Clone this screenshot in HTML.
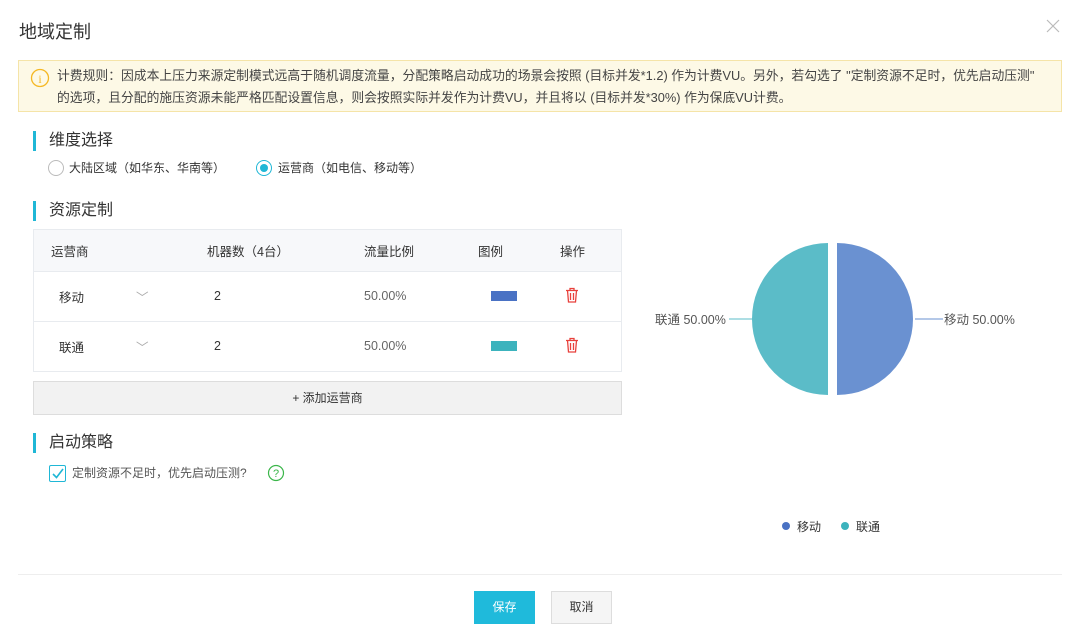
<!DOCTYPE html>
<html><head><meta charset="utf-8"><style>
*{margin:0;padding:0;box-sizing:border-box}
body{width:1080px;height:642px;background:#fff;font-family:"Liberation Sans","Noto Sans CJK SC",sans-serif;color:#333;position:relative;overflow:hidden;font-size:12px}
.a{position:absolute}
.title{left:19px;top:18px;font-size:18px;color:#333}
.alert{left:18px;top:60px;width:1044px;height:52px;background:#fdf9e6;border:1px solid #f5e4a8;}
.alert p{position:absolute;left:38px;top:4px;font-size:12.8px;line-height:22px;color:#444;white-space:nowrap}
.sec{font-size:16px;color:#333;border-left:3px solid #1fb7d6;padding-left:13px;height:20px;line-height:20px}
table{border-collapse:collapse;width:587px;font-size:12.5px;table-layout:fixed}
td{height:50px;border-bottom:1px solid #e8ebef;color:#333;padding:0}
tr.h td{height:41px}
</style></head><body>
<div class="a title">地域定制</div>
<svg class="a" style="left:1046px;top:19px" width="14" height="14"><path d="M1 1L13 13M13 1L1 13" stroke="#bbb" stroke-width="1.2"/></svg>
<div class="a alert">
<svg class="a" style="left:11px;top:7px" width="20" height="20"><circle cx="10" cy="10" r="8.5" fill="none" stroke="#f5b824" stroke-width="1.3"/><text x="10" y="15" text-anchor="middle" font-size="12" fill="#f5b824" font-family="Liberation Serif">i</text></svg>
<p>计费规则：因成本上压力来源定制模式远高于随机调度流量，分配策略启动成功的场景会按照 (目标并发*1.2) 作为计费VU。另外，若勾选了 "定制资源不足时，优先启动压测"<br>的选项，且分配的施压资源未能严格匹配设置信息，则会按照实际并发作为计费VU，并且将以 (目标并发*30%) 作为保底VU计费。</p>
</div>
<div class="a sec" style="left:33px;top:131px">维度选择</div>
<div class="a" style="left:48px;top:160px;width:16px;height:16px;border:1px solid #bbb;border-radius:50%"></div>
<div class="a" style="left:69px;top:160px;line-height:16px">大陆区域（如华东、华南等）</div>
<div class="a" style="left:256px;top:160px;width:16px;height:16px;border:1px solid #1fb7d6;border-radius:50%"><div style="margin:3px;width:8px;height:8px;border-radius:50%;background:#1fb7d6"></div></div>
<div class="a" style="left:278px;top:160px;line-height:16px">运营商（如电信、移动等）</div>
<div class="a sec" style="left:33px;top:201px">资源定制</div>
<div class="a" style="left:33px;top:229px;width:589px;border:1px solid #e8ebef;border-bottom:none">
<table>
<colgroup><col style="width:173px"><col style="width:157px"><col style="width:114px"><col style="width:82px"><col></colgroup>
<tr class="h" style="background:#f7f8fa"><td style="padding-left:17px">运营商</td><td>机器数（4台）</td><td>流量比例</td><td>图例</td><td>操作</td></tr>
<tr><td style="padding-left:25px">移动<span style="margin-left:52px;color:#aaa">﹀</span></td><td style="padding-left:7px">2</td><td style="color:#666">50.00%</td><td style="padding-left:13px"><div style="width:26px;height:10px;background:#4a72c4"></div></td><td style="padding-left:5px"><svg width="14" height="16"><path d="M1 3.5H13M5 3.5V1.5H9V3.5M2.5 3.5L3.5 15H10.5L11.5 3.5M5.5 6V13M8.5 6V13" fill="none" stroke="#e8413c" stroke-width="1.3"/></svg></td></tr>
<tr><td style="padding-left:25px">联通<span style="margin-left:52px;color:#aaa">﹀</span></td><td style="padding-left:7px">2</td><td style="color:#666">50.00%</td><td style="padding-left:13px"><div style="width:26px;height:10px;background:#3cb3bd"></div></td><td style="padding-left:5px"><svg width="14" height="16"><path d="M1 3.5H13M5 3.5V1.5H9V3.5M2.5 3.5L3.5 15H10.5L11.5 3.5M5.5 6V13M8.5 6V13" fill="none" stroke="#e8413c" stroke-width="1.3"/></svg></td></tr>
</table></div>
<div class="a" style="left:33px;top:381px;width:589px;height:34px;background:#f2f2f2;border:1px solid #ddd;text-align:center;line-height:32px">+ 添加运营商</div>
<div class="a sec" style="left:33px;top:433px">启动策略</div>
<div class="a" style="left:49px;top:465px;width:17px;height:17px;border:1px solid #1fb7d6;border-radius:2px"><svg width="15" height="15"><path d="M3 8L6.5 11.5L13 3" fill="none" stroke="#1fb7d6" stroke-width="1.6"/></svg></div>
<div class="a" style="left:72px;top:465px;line-height:17px;color:#555">定制资源不足时，优先启动压测?</div>
<svg class="a" style="left:267px;top:464px" width="18" height="18"><circle cx="9" cy="9" r="7.5" fill="none" stroke="#3bb64a" stroke-width="1.2"/><text x="9" y="13" text-anchor="middle" font-size="11" fill="#3bb64a">?</text></svg>
<svg class="a" style="left:640px;top:230px" width="420" height="320">
<path d="M188 13 A76 76 0 0 0 188 165 Z" fill="#5bbcc8"/>
<path d="M197 13 A76 76 0 0 1 197 165 Z" fill="#6a91d1"/>
<line x1="89" y1="89" x2="113" y2="89" stroke="#5bbcc8"/>
<line x1="275" y1="89" x2="303" y2="89" stroke="#6a91d1"/>
<text x="15" y="94" font-size="12.5" fill="#555">联通 50.00%</text>
<text x="304" y="94" font-size="12.5" fill="#555">移动 50.00%</text>
<circle cx="146" cy="296" r="4" fill="#4a72c4"/><text x="157" y="301" font-size="12" fill="#333">移动</text>
<circle cx="205" cy="296" r="4" fill="#3cb3bd"/><text x="216" y="301" font-size="12" fill="#333">联通</text>
</svg>
<div class="a" style="left:18px;top:574px;width:1044px;height:1px;background:#eee"></div>
<div class="a" style="left:474px;top:591px;width:61px;height:33px;background:#1fbadb;color:#fff;text-align:center;line-height:33px">保存</div>
<div class="a" style="left:551px;top:591px;width:61px;height:33px;background:#f5f5f5;border:1px solid #ddd;text-align:center;line-height:31px">取消</div>
</body></html>
